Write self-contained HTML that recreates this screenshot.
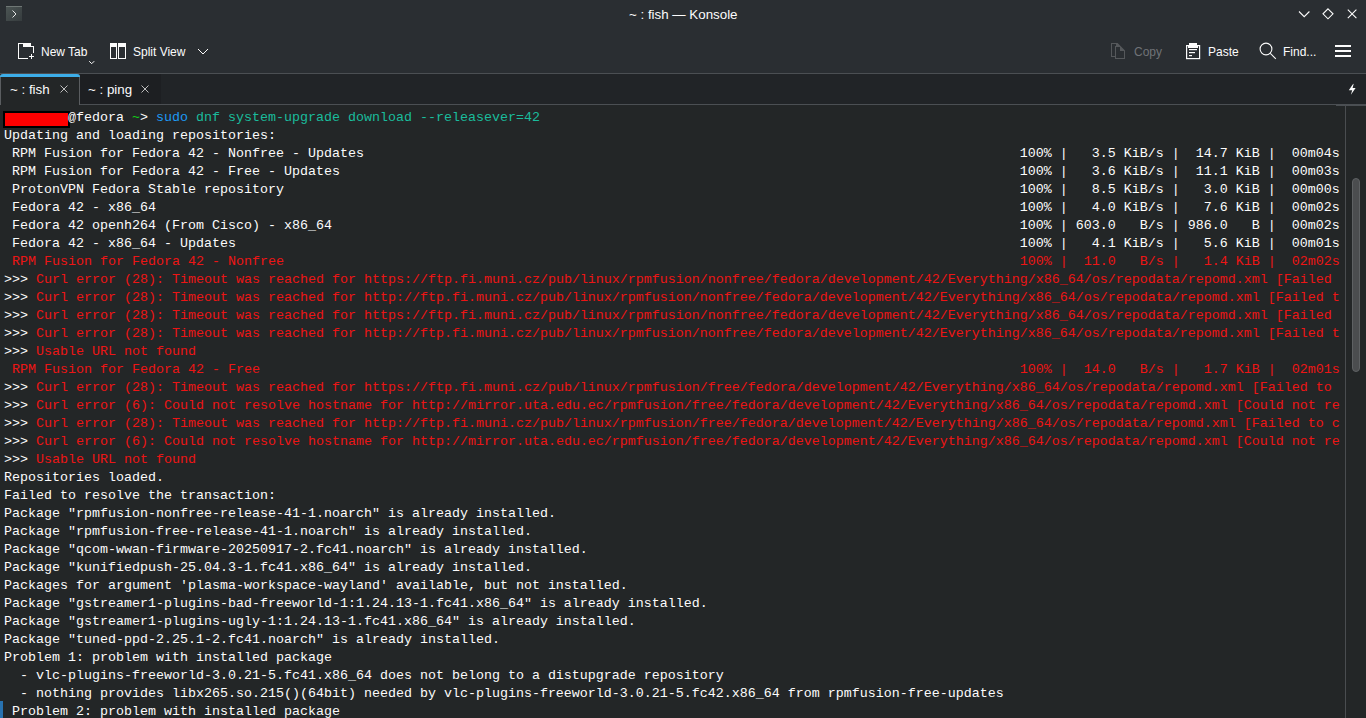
<!DOCTYPE html>
<html><head><meta charset="utf-8">
<style>
*{margin:0;padding:0;box-sizing:border-box}
html,body{width:1366px;height:718px;overflow:hidden;background:#232627}
body{position:relative;font-family:"Liberation Sans",sans-serif;color:#fcfcfc}
.abs{position:absolute}
#title{left:0;top:0;width:1366px;height:30px;background:#2a2e32}
#toolbar{left:0;top:30px;width:1366px;height:43px;background:#2a2e32}
#tbline{left:0;top:73px;width:1366px;height:1px;background:#4b4f53}
#tabbar{left:0;top:74px;width:1366px;height:30px;background:#212427}
#tabline{left:79px;top:104px;width:1287px;height:1px;background:#4b4f53}
#term{left:0;top:105px;width:1366px;height:613px;background:#232627}
.ui{position:absolute;font-size:13.33px;white-space:nowrap;line-height:16px}
.sx{transform:scaleX(0.9);transform-origin:0 0}
#lines{position:absolute;left:4px;top:109px;font-family:"Liberation Mono",monospace;font-size:13.333px;line-height:18px;white-space:pre;color:#fcfcfc}
.ln{height:18px}
.w{color:#fcfcfc}.r{color:#ed1515}.g{color:#11d116}.b{color:#1d99f3}.c{color:#1abc9c}
svg{position:absolute;overflow:visible}
</style></head><body>
<div id="title" class="abs"></div>
<div id="toolbar" class="abs"></div>
<div id="tbline" class="abs"></div>
<div id="tabbar" class="abs"></div>
<div id="tabline" class="abs"></div>
<div id="term" class="abs"></div>

<!-- title bar -->
<div class="abs" style="left:6px;top:6px;width:16px;height:15px;background:linear-gradient(135deg,#4b5453,#363c3e);border-top:1px solid #6f7775"></div>
<svg style="left:0;top:0" width="30" height="30"><path d="M12.5 10.5 L16 14 L12.5 17.5" fill="none" stroke="#e8e8e8" stroke-width="1"/></svg>
<div class="ui" id="ttl" style="left:629px;top:7px;color:#fcfcfc">~ : fish — Konsole</div>
<svg style="left:1290px;top:0" width="76" height="30" viewBox="1290 0 76 30">
 <path d="M1299 11.5 L1304.2 16.7 L1309.4 11.5" fill="none" stroke="#fcfcfc" stroke-width="1.1"/>
 <path d="M1328 8.8 L1333 13.8 L1328 18.8 L1323 13.8 Z" fill="none" stroke="#fcfcfc" stroke-width="1.1"/>
 <path d="M1347.8 9.6 L1356.4 18.2 M1356.4 9.6 L1347.8 18.2" fill="none" stroke="#fcfcfc" stroke-width="1.1"/>
</svg>

<!-- toolbar -->
<svg style="left:0;top:0" width="40" height="70" shape-rendering="crispEdges" fill="#fcfcfc">
 <rect x="18" y="43" width="1" height="16"/><rect x="18" y="43" width="13" height="1"/><rect x="23" y="43" width="8" height="4"/>
 <rect x="31" y="46" width="3" height="1"/><rect x="33" y="46" width="1" height="7"/><rect x="18" y="58" width="10" height="1"/>
 <rect x="31" y="54" width="1" height="5"/><rect x="29" y="56" width="5" height="1"/>
</svg>
<div class="ui sx" style="left:41px;top:44px">New Tab</div>
<svg style="left:0;top:0" width="100" height="70"><path d="M89.2 61.2 L91.7 63.7 L94.2 61.2" fill="none" stroke="#fcfcfc" stroke-width="1"/></svg>
<svg style="left:0;top:0" width="130" height="70" shape-rendering="crispEdges">
 <rect x="110" y="43" width="7" height="16" fill="#fcfcfc"/><rect x="111" y="47" width="5" height="11" fill="#2a2e32"/>
 <rect x="118" y="43" width="8" height="16" fill="#fcfcfc"/><rect x="119" y="47" width="6" height="11" fill="#2a2e32"/>
</svg>
<div class="ui sx" style="left:133px;top:44px">Split View</div>
<svg style="left:0;top:0" width="220" height="70"><path d="M198 49 L203 54 L208 49" fill="none" stroke="#fcfcfc" stroke-width="1"/></svg>

<svg style="left:0;top:0" width="1366" height="70">
<g fill="#55585b" shape-rendering="crispEdges">
  <rect x="1111" y="43" width="1" height="14"/><rect x="1111" y="43" width="6" height="1"/><rect x="1111" y="56" width="4" height="1"/>
  <rect x="1115" y="46" width="1" height="13"/><rect x="1115" y="58" width="10" height="1"/><rect x="1124" y="51" width="1" height="8"/>
 </g>
 <path d="M1116 43 H1117.6 L1125 50.4 V51 H1120 V47 H1116 Z" fill="#55585b"/>
 <g fill="none" stroke="#fcfcfc" stroke-width="1.2">
  <rect x="1186.6" y="45.6" width="13" height="13"/>
 </g>
 <rect x="1189" y="43" width="8" height="5" fill="#fcfcfc"/><rect x="1188" y="46" width="10" height="2" fill="#fcfcfc"/>
 <rect x="1189" y="49" width="8" height="1.2" fill="#fcfcfc"/>
 <rect x="1189" y="52" width="6" height="1.2" fill="#fcfcfc"/>
 <rect x="1189" y="55" width="3" height="1.2" fill="#fcfcfc"/>
 <g fill="none" stroke="#fcfcfc" stroke-width="1.1">
  <circle cx="1266" cy="49" r="5.9"/>
  <path d="M1270.3 53.3 L1275.8 58.8"/>
 </g>
 <rect x="1335" y="45" width="16" height="2" fill="#fcfcfc"/>
 <rect x="1335" y="50" width="16" height="2" fill="#fcfcfc"/>
 <rect x="1335" y="55" width="16" height="2" fill="#fcfcfc"/>
</svg>
<div class="ui sx" style="left:1134px;top:44px;color:#707377">Copy</div>
<div class="ui sx" style="left:1208px;top:44px">Paste</div>
<div class="ui sx" style="left:1283px;top:44px">Find...</div>

<!-- tabs -->
<div class="abs" style="left:0;top:74px;width:80px;height:31px;background:#232627;border-left:1px solid #5a5d60;border-right:1px solid #5a5d60;border-top-left-radius:3px;border-top-right-radius:3px"></div>
<div class="abs" style="left:0;top:74px;width:80px;height:3px;background:#3daee9;border-top-left-radius:3px;border-top-right-radius:3px"></div>
<div class="abs" style="left:80px;top:74px;width:81px;height:30px;background:#1d1f22"></div>
<div class="ui" style="left:10px;top:82px">~ : fish</div>
<div class="ui" style="left:88px;top:82px">~ : ping</div>
<svg style="left:0;top:0" width="170" height="110">
 <path d="M60.5 85.5 L67.5 92.5 M67.5 85.5 L60.5 92.5 M141.5 85.5 L148.5 92.5 M148.5 85.5 L141.5 92.5" fill="none" stroke="#bdbdbd" stroke-width="1"/>
</svg>
<svg style="left:0;top:0" width="1366" height="110"><path d="M1353.2 83.8 L1348.8 90.3 H1352.2 L1350.9 94.8 L1355.6 88 H1352.6 L1353.6 84 Z" fill="#fcfcfc"/></svg>

<!-- scrollbar -->
<div class="abs" style="left:1336px;top:104px;width:30px;height:2px;background:#4b4f53"></div>
<div class="abs" style="left:1345px;top:105px;width:1px;height:613px;background:#4a4d50"></div>
<div class="abs" style="left:1352px;top:178px;width:8px;height:194px;background:#4b4d4f;border:1px solid #5e6163;border-radius:4px"></div>

<!-- redaction -->
<div class="abs" style="left:3px;top:111px;width:67px;height:17px;background:#000"></div>
<div class="abs" style="left:5px;top:113px;width:63px;height:13px;background:#ff0000"></div>
<div class="abs" style="left:0;top:701px;width:3px;height:17px;background:#2872b0"></div>

<div id="lines"><div class="ln"><span class="w">        </span><span class="w">@fedora </span><span class="g">~</span><span class="w">&gt; </span><span class="b">sudo</span><span class="c"> dnf system-upgrade download --releasever=42</span></div><div class="ln"><span class="w">Updating and loading repositories:</span></div><div class="ln"><span class="w"> RPM Fusion for Fedora 42 - Nonfree - Updates                                                                                  100% |   3.5 KiB/s |  14.7 KiB |  00m04s</span></div><div class="ln"><span class="w"> RPM Fusion for Fedora 42 - Free - Updates                                                                                     100% |   3.6 KiB/s |  11.1 KiB |  00m03s</span></div><div class="ln"><span class="w"> ProtonVPN Fedora Stable repository                                                                                            100% |   8.5 KiB/s |   3.0 KiB |  00m00s</span></div><div class="ln"><span class="w"> Fedora 42 - x86_64                                                                                                            100% |   4.0 KiB/s |   7.6 KiB |  00m02s</span></div><div class="ln"><span class="w"> Fedora 42 openh264 (From Cisco) - x86_64                                                                                      100% | 603.0   B/s | 986.0   B |  00m02s</span></div><div class="ln"><span class="w"> Fedora 42 - x86_64 - Updates                                                                                                  100% |   4.1 KiB/s |   5.6 KiB |  00m01s</span></div><div class="ln"><span class="r"> RPM Fusion for Fedora 42 - Nonfree                                                                                            100% |  11.0   B/s |   1.4 KiB |  02m02s</span></div><div class="ln"><span class="w">&gt;&gt;&gt; </span><span class="r">Curl error (28): Timeout was reached for https://ftp.fi.muni.cz/pub/linux/rpmfusion/nonfree/fedora/development/42/Everything/x86_64/os/repodata/repomd.xml [Failed </span></div><div class="ln"><span class="w">&gt;&gt;&gt; </span><span class="r">Curl error (28): Timeout was reached for http://ftp.fi.muni.cz/pub/linux/rpmfusion/nonfree/fedora/development/42/Everything/x86_64/os/repodata/repomd.xml [Failed t</span></div><div class="ln"><span class="w">&gt;&gt;&gt; </span><span class="r">Curl error (28): Timeout was reached for https://ftp.fi.muni.cz/pub/linux/rpmfusion/nonfree/fedora/development/42/Everything/x86_64/os/repodata/repomd.xml [Failed </span></div><div class="ln"><span class="w">&gt;&gt;&gt; </span><span class="r">Curl error (28): Timeout was reached for http://ftp.fi.muni.cz/pub/linux/rpmfusion/nonfree/fedora/development/42/Everything/x86_64/os/repodata/repomd.xml [Failed t</span></div><div class="ln"><span class="w">&gt;&gt;&gt; </span><span class="r">Usable URL not found</span></div><div class="ln"><span class="r"> RPM Fusion for Fedora 42 - Free                                                                                               100% |  14.0   B/s |   1.7 KiB |  02m01s</span></div><div class="ln"><span class="w">&gt;&gt;&gt; </span><span class="r">Curl error (28): Timeout was reached for https://ftp.fi.muni.cz/pub/linux/rpmfusion/free/fedora/development/42/Everything/x86_64/os/repodata/repomd.xml [Failed to </span></div><div class="ln"><span class="w">&gt;&gt;&gt; </span><span class="r">Curl error (6): Could not resolve hostname for http://mirror.uta.edu.ec/rpmfusion/free/fedora/development/42/Everything/x86_64/os/repodata/repomd.xml [Could not re</span></div><div class="ln"><span class="w">&gt;&gt;&gt; </span><span class="r">Curl error (28): Timeout was reached for http://ftp.fi.muni.cz/pub/linux/rpmfusion/free/fedora/development/42/Everything/x86_64/os/repodata/repomd.xml [Failed to c</span></div><div class="ln"><span class="w">&gt;&gt;&gt; </span><span class="r">Curl error (6): Could not resolve hostname for http://mirror.uta.edu.ec/rpmfusion/free/fedora/development/42/Everything/x86_64/os/repodata/repomd.xml [Could not re</span></div><div class="ln"><span class="w">&gt;&gt;&gt; </span><span class="r">Usable URL not found</span></div><div class="ln"><span class="w">Repositories loaded.</span></div><div class="ln"><span class="w">Failed to resolve the transaction:</span></div><div class="ln"><span class="w">Package &quot;rpmfusion-nonfree-release-41-1.noarch&quot; is already installed.</span></div><div class="ln"><span class="w">Package &quot;rpmfusion-free-release-41-1.noarch&quot; is already installed.</span></div><div class="ln"><span class="w">Package &quot;qcom-wwan-firmware-20250917-2.fc41.noarch&quot; is already installed.</span></div><div class="ln"><span class="w">Package &quot;kunifiedpush-25.04.3-1.fc41.x86_64&quot; is already installed.</span></div><div class="ln"><span class="w">Packages for argument &#x27;plasma-workspace-wayland&#x27; available, but not installed.</span></div><div class="ln"><span class="w">Package &quot;gstreamer1-plugins-bad-freeworld-1:1.24.13-1.fc41.x86_64&quot; is already installed.</span></div><div class="ln"><span class="w">Package &quot;gstreamer1-plugins-ugly-1:1.24.13-1.fc41.x86_64&quot; is already installed.</span></div><div class="ln"><span class="w">Package &quot;tuned-ppd-2.25.1-2.fc41.noarch&quot; is already installed.</span></div><div class="ln"><span class="w">Problem 1: problem with installed package</span></div><div class="ln"><span class="w">  - vlc-plugins-freeworld-3.0.21-5.fc41.x86_64 does not belong to a distupgrade repository</span></div><div class="ln"><span class="w">  - nothing provides libx265.so.215()(64bit) needed by vlc-plugins-freeworld-3.0.21-5.fc42.x86_64 from rpmfusion-free-updates</span></div><div class="ln"><span class="w"> Problem 2: problem with installed package</span></div></div>
</body></html>
